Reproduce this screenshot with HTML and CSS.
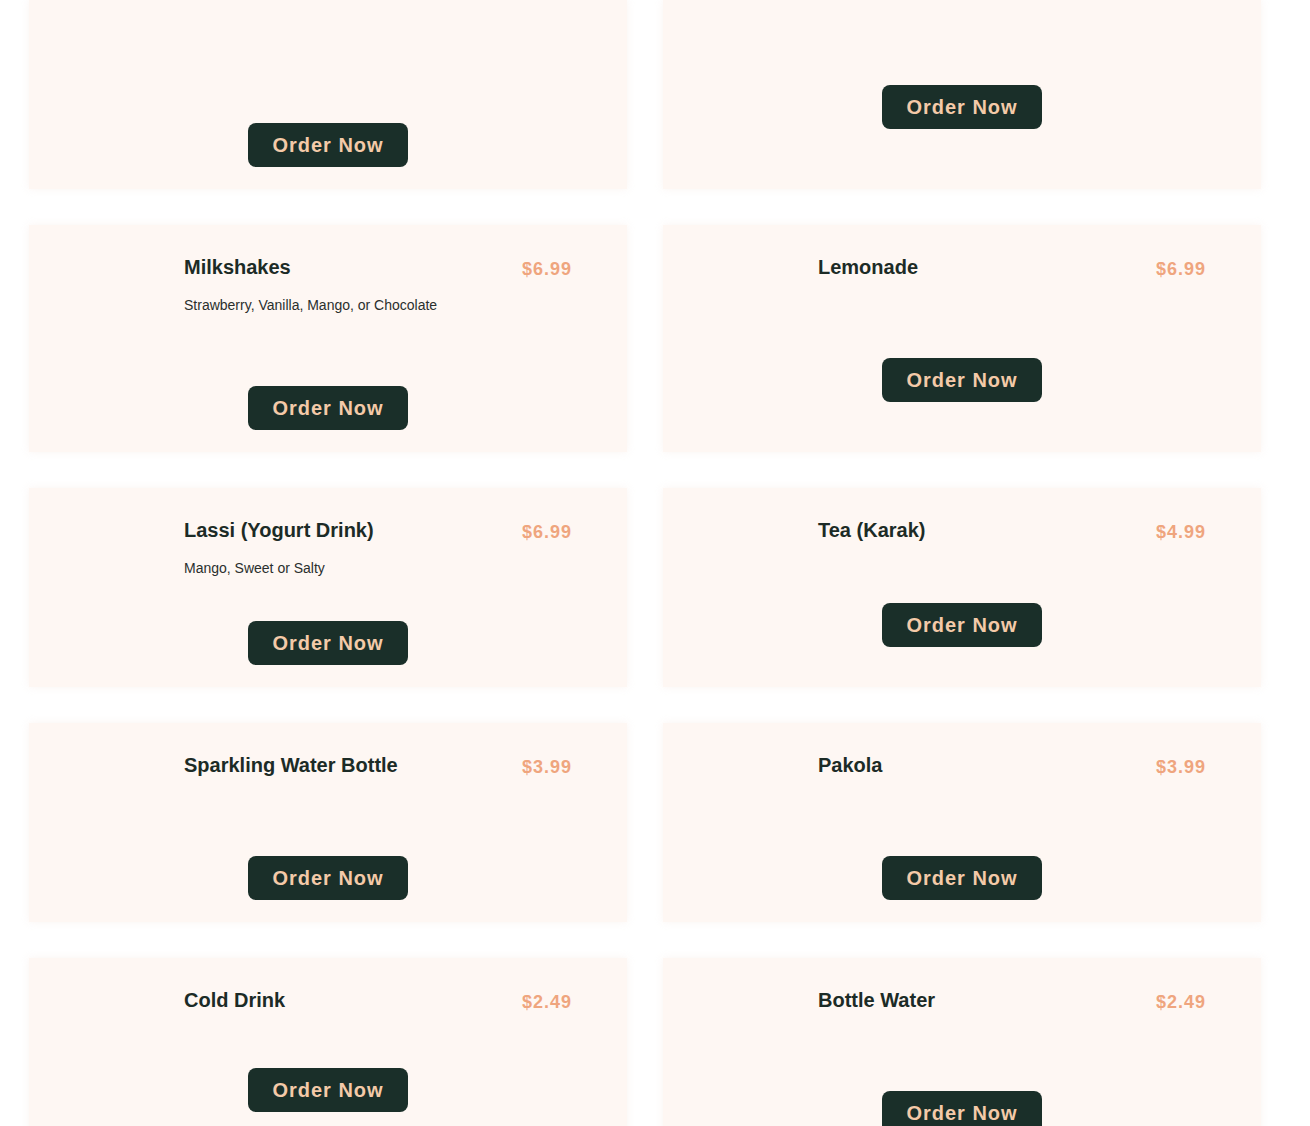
FILE: index.html
```html
<!DOCTYPE html>
<html lang="en">
<head>
<meta charset="utf-8">
<title>Menu - Drinks</title>
<link rel="stylesheet" href="styles.css">
</head>
<body>
<main class="menu">
  <article class="card card--first">
    <button class="order order--first-left">Order Now</button>
  </article>
  <article class="card card--first">
    <button class="order order--first-right">Order Now</button>
  </article>

  <article class="card">
    <div class="head"><h3 class="name">Milkshakes</h3><span class="price">$6.99</span></div>
    <p class="desc">Strawberry, Vanilla, Mango, or Chocolate</p>
    <button class="order gap-71">Order Now</button>
  </article>
  <article class="card">
    <div class="head"><h3 class="name">Lemonade</h3><span class="price">$6.99</span></div>
    <button class="order gap-79">Order Now</button>
  </article>

  <article class="card">
    <div class="head"><h3 class="name">Lassi (Yogurt Drink)</h3><span class="price">$6.99</span></div>
    <p class="desc">Mango, Sweet or Salty</p>
    <button class="order gap-43">Order Now</button>
  </article>
  <article class="card">
    <div class="head"><h3 class="name">Tea (Karak)</h3><span class="price">$4.99</span></div>
    <button class="order gap-61">Order Now</button>
  </article>

  <article class="card">
    <div class="head"><h3 class="name">Sparkling Water Bottle</h3><span class="price">$3.99</span></div>
    <button class="order gap-79">Order Now</button>
  </article>
  <article class="card">
    <div class="head"><h3 class="name">Pakola</h3><span class="price">$3.99</span></div>
    <button class="order gap-79">Order Now</button>
  </article>

  <article class="card">
    <div class="head"><h3 class="name">Cold Drink</h3><span class="price">$2.49</span></div>
    <button class="order gap-56">Order Now</button>
  </article>
  <article class="card">
    <div class="head"><h3 class="name">Bottle Water</h3><span class="price">$2.49</span></div>
    <button class="order gap-79">Order Now</button>
  </article>
</main>
</body>
</html>
```

FILE: styles.css
```css
* { box-sizing: border-box; }
html, body { margin: 0; padding: 0; background: #ffffff; }
body { font-family: "Liberation Sans", Arial, sans-serif; }

.menu {
  display: grid;
  grid-template-columns: 598px 598px;
  column-gap: 36px;
  row-gap: 36px;
  padding: 0 0 40px 29px;
}

.card {
  background: #fef7f3;
  box-shadow: 0 0 8px rgba(240, 220, 210, 0.3);
  display: flex;
  flex-direction: column;
  padding: 31px 55px 22px 155px;
}

.card--first { height: 189px; padding-top: 0; }

.head {
  display: flex;
  justify-content: space-between;
  align-items: flex-start;
  height: 23px;
}

.name {
  margin: 0;
  font-size: 20px;
  line-height: 23px;
  font-weight: 700;
  color: #1c2b26;
}

.price {
  margin-top: 3px;
  font-size: 18px;
  line-height: 20px;
  font-weight: 700;
  letter-spacing: 1px;
  color: #efa57e;
}

.desc {
  margin: 16px 0 0;
  font-size: 14px;
  line-height: 20px;
  color: #2a2f2d;
}

.order {
  align-self: center;
  margin-left: -100px;
  width: 160px;
  height: 44px;
  flex-shrink: 0;
  border: 0;
  border-radius: 8px;
  background: #1a2f29;
  color: #f4caa8;
  font-family: "Liberation Sans", Arial, sans-serif;
  font-size: 20px;
  font-weight: 700;
  letter-spacing: 1px;
  padding: 0;
  cursor: pointer;
}

.order--first-left { margin-top: 123px; }
.order--first-right { margin-top: 85px; }
.gap-43 { margin-top: 43px; }
.gap-56 { margin-top: 56px; }
.gap-61 { margin-top: 61px; }
.gap-71 { margin-top: 71px; }
.gap-79 { margin-top: 79px; }
```
